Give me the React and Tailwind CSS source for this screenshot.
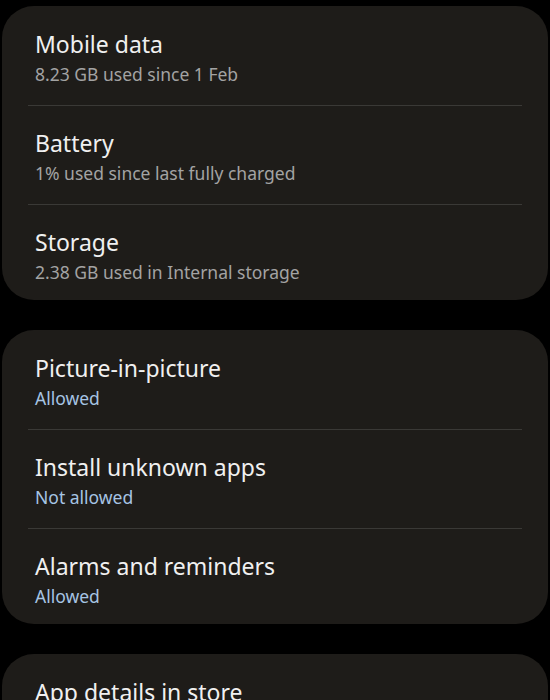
const groups = [
  [
    { title: 'Mobile data', sub: '8.23 GB used since 1 Feb' },
    { title: 'Battery', sub: '1% used since last fully charged' },
    { title: 'Storage', sub: '2.38 GB used in Internal storage' },
  ],
  [
    { title: 'Picture-in-picture', sub: 'Allowed', blue: true },
    { title: 'Install unknown apps', sub: 'Not allowed', blue: true },
    { title: 'Alarms and reminders', sub: 'Allowed', blue: true },
  ],
  [{ title: 'App details in store', sub: 'App downloaded from Galaxy Store' }],
]

function Row({ title, sub, blue, last }) {
  return (
    <div className={`${last ? 'h-[95px]' : 'h-[98px]'} pt-[22px] px-[33px]`}>
      <div className="text-[23px] leading-[30px] text-[#f0f0f0]">{title}</div>
      <div className={`mt-[3px] text-[17.5px] leading-[24px] ${blue ? 'text-[#a6c4e4]' : 'text-[#a3a3a3]'}`}>
        {sub}
      </div>
    </div>
  )
}

export default function App() {
  return (
    <div className="h-[700px] overflow-hidden bg-black px-[2px] pt-[6px] flex flex-col gap-[30px] font-['Noto_Sans',sans-serif]">
      {groups.map((rows, gi) => (
        <div key={gi} className="shrink-0 rounded-[32px] bg-[#1e1c19] pt-px">
          {rows.map((r, i) => (
            <div key={r.title}>
              {i > 0 && <div className="mx-[26px] h-px bg-[#3a3936]" />}
              <Row {...r} last={i === rows.length - 1} />
            </div>
          ))}
        </div>
      ))}
    </div>
  )
}
